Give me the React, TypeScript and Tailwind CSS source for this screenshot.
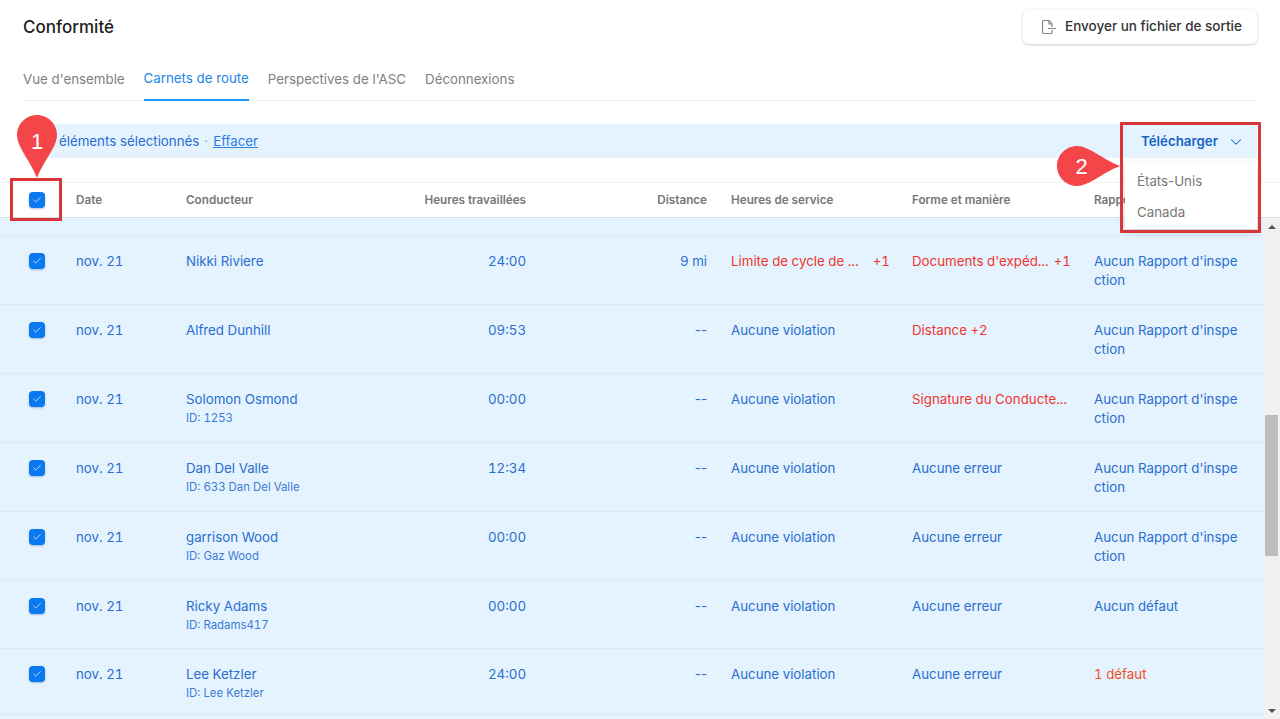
import { ChevronDown, Check } from 'lucide-react'

type Row = {
  height: string
  name: string
  id?: string
  hours: string
  distance: string
  hos: string
  hosMore?: string
  hosRed?: boolean
  form: string
  formMore?: string
  formRed?: boolean
  report: string
  reportTone?: string
}

const noReport = "Aucun Rapport d'inspection"

const rows: Row[] = [
  { height: 'h-[69px]', name: 'Nikki Riviere', hours: '24:00', distance: '9 mi', hos: 'Limite de cycle de ...', hosMore: '+1', hosRed: true, form: "Documents d'expéd...", formMore: '+1', formRed: true, report: noReport },
  { height: 'h-[69px]', name: 'Alfred Dunhill', hours: '09:53', distance: '--', hos: 'Aucune violation', form: 'Distance +2', formRed: true, report: noReport },
  { height: 'h-[69px]', name: 'Solomon Osmond', id: 'ID: 1253', hours: '00:00', distance: '--', hos: 'Aucune violation', form: 'Signature du Conducte...', formRed: true, report: noReport },
  { height: 'h-[69px]', name: 'Dan Del Valle', id: 'ID: 633 Dan Del Valle', hours: '12:34', distance: '--', hos: 'Aucune violation', form: 'Aucune erreur', report: noReport },
  { height: 'h-[69px]', name: 'garrison Wood', id: 'ID: Gaz Wood', hours: '00:00', distance: '--', hos: 'Aucune violation', form: 'Aucune erreur', report: noReport },
  { height: 'h-[68px]', name: 'Ricky Adams', id: 'ID: Radams417', hours: '00:00', distance: '--', hos: 'Aucune violation', form: 'Aucune erreur', report: 'Aucun défaut' },
  { height: 'h-[66px]', name: 'Lee Ketzler', id: 'ID: Lee Ketzler', hours: '24:00', distance: '--', hos: 'Aucune violation', form: 'Aucune erreur', report: '1 défaut', reportTone: 'text-[#f2501f]' },
]

function Box() {
  return (
    <span className="flex h-4 w-4 items-center justify-center rounded-[4px] bg-[#0a78ee] shadow-[0_1px_2px_rgba(0,60,140,0.3)]">
      <Check className="h-[10px] w-[10px] text-[#dcecff]" strokeWidth={2} />
    </span>
  )
}

export default function App() {
  return (
    <div className="relative h-[719px] w-[1280px] overflow-hidden bg-white font-['Inter',sans-serif] text-[13.3px]">
      {/* Header */}
      <div className="flex h-[64px] items-start justify-between px-[23px] pt-[9px]">
        <h1 className="mt-[6px] text-[17px] leading-6 font-medium text-[#222]">Conformité</h1>
        <button className="flex h-[35px] w-[234px] items-center gap-[8px] rounded-md bg-white pl-[18px] text-[13.5px] font-medium text-[#333] shadow-[0_1px_3px_rgba(0,0,0,0.2)]">
          <svg width="16" height="16" viewBox="0 0 16 16" fill="none" stroke="#888" strokeWidth="1.2">
            <path d="M11 8V5L8 1.5H2.5Q1.5 1.5 1.5 2.5V13.5Q1.5 14.5 2.5 14.5H10Q11 14.5 11 13.5V11" />
            <path d="M8 1.5V5H11M7 9.5H15" />
          </svg>
          Envoyer un fichier de sortie
        </button>
      </div>

      {/* Tabs */}
      <div className="mx-[23px] flex h-[37px] gap-[19px] border-b border-[#f2f2f2] text-[#808080]">
        <span className="pt-[6px]">Vue d'ensemble</span>
        <span className="-mb-px border-b-2 border-[#1a94f5] pt-[5px] text-[#1b86e6]">Carnets de route</span>
        <span className="pt-[6px]">Perspectives de l'ASC</span>
        <span className="pt-[6px]">Déconnexions</span>
      </div>

      {/* Selection bar */}
      <div className="mx-[23px] mt-[23px] flex h-[34px] items-center justify-between bg-[#e4f3fe] pl-[36px] text-[#2a6ed0]">
        <div className="flex items-center gap-[5px] pt-[1px]">
          <span>éléments sélectionnés</span>
          <span className="text-[#9ab]">·</span>
          <span className="text-[#2b7de0] underline">Effacer</span>
        </div>
        <div className="flex h-[34px] w-[132px] items-center gap-[9px] bg-[#e4f3fe] pt-[1px] pl-[16px] font-semibold text-[#1763c6]">
          Télécharger
          <ChevronDown className="h-[18px] w-[18px]" strokeWidth={1.4} />
        </div>
      </div>

      {/* Table head */}
      <div className="mt-[24px] grid h-[36px] grid-cols-[76px_110px_150px_190px_181px_205px_182px_1fr] items-center border-y border-t-[#f3f3f3] border-b-[#d5dfe6] pt-[2px] text-[11.7px] font-semibold text-[#777]">
        <div className="mt-[-2px] flex justify-center"><span className="ml-[-2px]"><Box /></span></div>
        <div>Date</div>
        <div>Conducteur</div>
        <div className="text-right">Heures travaillées</div>
        <div className="text-right">Distance</div>
        <div className="pl-[24px]">Heures de service</div>
        <div>Forme et manière</div>
        <div>Rapport</div>
      </div>

      {/* Body */}
      <div className="flex h-[501px]">
        <div className="h-full w-[1263px] overflow-hidden bg-[#e4f3fe]">
          <div className="h-[18px] border-b border-[#d8e9f5]" />
          {rows.map((r) => (
            <div key={r.name} className={`grid ${r.height} grid-cols-[76px_110px_150px_190px_181px_205px_182px_1fr] border-b border-[#d8e9f5] pt-[16px] leading-[19px] text-[#2a6ed0] tabular-nums`}>
              <div className="flex justify-center pt-[1px]"><span className="ml-[-2px]"><Box /></span></div>
              <div>nov. 21</div>
              <div className="whitespace-nowrap">
                <div>{r.name}</div>
                {r.id && <div className="text-[11.4px] leading-[19px] text-[#3b7cd4]">{r.id}</div>}
              </div>
              <div className="text-right">{r.hours}</div>
              <div className="text-right normal-nums">{r.distance}</div>
              <div className={`flex justify-between pr-[22px] pl-[24px] ${r.hosRed ? 'text-[#f0352e]' : ''}`}>
                <span>{r.hos}</span>
                {r.hosMore && <span>{r.hosMore}</span>}
              </div>
              <div className={`flex justify-between pr-[23px] whitespace-nowrap ${r.formRed ? 'text-[#f0352e]' : ''}`}>
                <span>{r.form}</span>
                {r.formMore && <span>{r.formMore}</span>}
              </div>
              <div className={`w-[146px] break-all ${r.reportTone ?? ''}`}>{r.report}</div>
            </div>
          ))}
        </div>
        {/* Scrollbar */}
        <div className="flex w-[17px] flex-col items-center bg-[#f1f1f1]">
          <div className="mt-[7px] h-0 w-0 border-x-[4px] border-b-[4px] border-x-transparent border-b-[#505050]" />
          <div className="mt-[186px] h-[141px] w-[13px] bg-[#bdbdbd]" />
          <div className="mt-[153px] h-0 w-0 border-x-[4px] border-t-[4px] border-x-transparent border-t-[#505050]" />
        </div>
      </div>

      {/* Dropdown menu */}
      <div className="absolute top-[163px] left-[1125px] flex h-[66px] w-[132px] flex-col bg-white pt-[3px] pl-[12px] leading-[31px] text-[#777] shadow-[0_3px_8px_rgba(0,0,0,0.15)]">
        <span>États-Unis</span>
        <span>Canada</span>
      </div>

      {/* Callouts */}
      <div className="absolute top-[178px] left-[10px] h-[43px] w-[52px] border-[3px] border-[#d9363a]" />
      <div className="absolute top-[122px] left-[1120px] h-[111px] w-[141px] border-[3px] border-[#d9363a]" />
      <svg className="absolute top-[115px] left-[17px]" width="40" height="63" viewBox="0 0 40 63">
        <path d="M20 0C31 0 40 9 40 20C40 32 27 45 20 63C13 45 0 32 0 20C0 9 9 0 20 0Z" fill="#f44649" />
        <text x="20" y="34" textAnchor="middle" fontSize="22" fill="#fff" fontFamily="Liberation Sans, sans-serif">1</text>
      </svg>
      <svg className="absolute top-[146px] left-[1057px]" width="63" height="40" viewBox="0 0 63 40">
        <path d="M20 0C32 0 45 13 63 20C45 27 32 40 20 40C9 40 0 31 0 20C0 9 9 0 20 0Z" fill="#f44649" />
        <text x="24.5" y="28" textAnchor="middle" fontSize="22" fill="#fff" fontFamily="Liberation Sans, sans-serif">2</text>
      </svg>
    </div>
  )
}
